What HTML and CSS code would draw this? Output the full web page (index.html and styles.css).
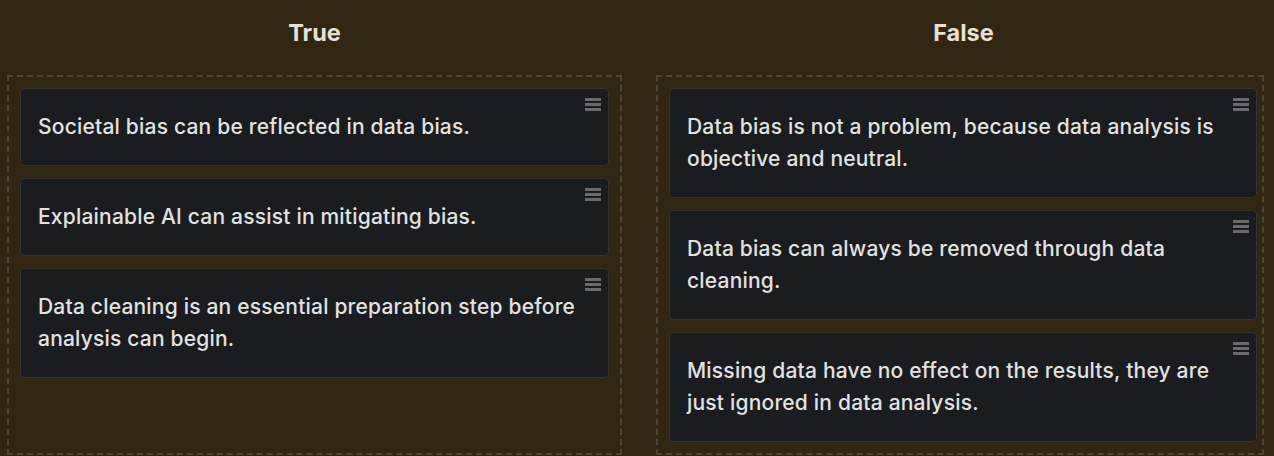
FILE: index.html
```html
<!DOCTYPE html>
<html lang="en">
<head>
<meta charset="utf-8">
<title>True / False sort</title>
<link rel="stylesheet" href="styles.css">
</head>
<body>
<div class="board">
  <section class="column">
    <h2 class="column-title">True</h2>
    <div class="dropzone">
      <div class="card"><p>Societal bias can be reflected in data bias.</p><span class="handle"><i></i><i></i><i></i></span></div>
      <div class="card"><p>Explainable AI can assist in mitigating bias.</p><span class="handle"><i></i><i></i><i></i></span></div>
      <div class="card"><p>Data cleaning is an essential preparation step before analysis can begin.</p><span class="handle"><i></i><i></i><i></i></span></div>
    </div>
  </section>
  <section class="column">
    <h2 class="column-title">False</h2>
    <div class="dropzone dropzone-right">
      <div class="card"><p>Data bias is not a problem, because data analysis is objective and neutral.</p><span class="handle"><i></i><i></i><i></i></span></div>
      <div class="card"><p>Data bias can always be removed through data cleaning.</p><span class="handle"><i></i><i></i><i></i></span></div>
      <div class="card"><p>Missing data have no effect on the results, they are just ignored in data analysis.</p><span class="handle"><i></i><i></i><i></i></span></div>
    </div>
  </section>
</div>
</body>
</html>
```
FILE: styles.css
```css
html, body {
  margin: 0;
  padding: 0;
  background: #302612;
  height: 100%;
  overflow: hidden;
}

body {
  font-family: Inter, "Liberation Sans", sans-serif;
  color: #e3e3e3;
}

.board {
  display: grid;
  grid-template-columns: 615px 615px;
  column-gap: 34px;
  padding-left: 7px;
}

.column {
  display: flex;
  flex-direction: column;
  align-items: stretch;
}

.column-title {
  margin: 0;
  height: 75px;
  padding-top: 19px;
  box-sizing: border-box;
  font-size: 23.5px;
  line-height: 28px;
  font-weight: 700;
  text-align: center;
  color: #e6e1d3;
}

.dropzone {
  flex: 1;
  border: 2px dashed #4f4532;
  padding: 11px;
  display: flex;
  flex-direction: column;
  gap: 12px;
  box-sizing: border-box;
}

.dropzone-right {
  width: 608px;
  padding-right: 5px;
}

.card {
  position: relative;
  background: #1b1c1f;
  border: 1px solid #34332d;
  border-radius: 4px;
  padding: 22px 29px 22px 17px;
}

.card p {
  margin: 0;
  font-size: 21px;
  line-height: 32px;
  font-weight: 500;
  letter-spacing: 0.2px;
  color: #e2e2e2;
}

.handle {
  position: absolute;
  top: 9px;
  right: 7px;
  width: 16px;
  display: flex;
  flex-direction: column;
  gap: 2px;
}

.handle i {
  display: block;
  height: 3px;
  background: #6a6a6a;
}
```
